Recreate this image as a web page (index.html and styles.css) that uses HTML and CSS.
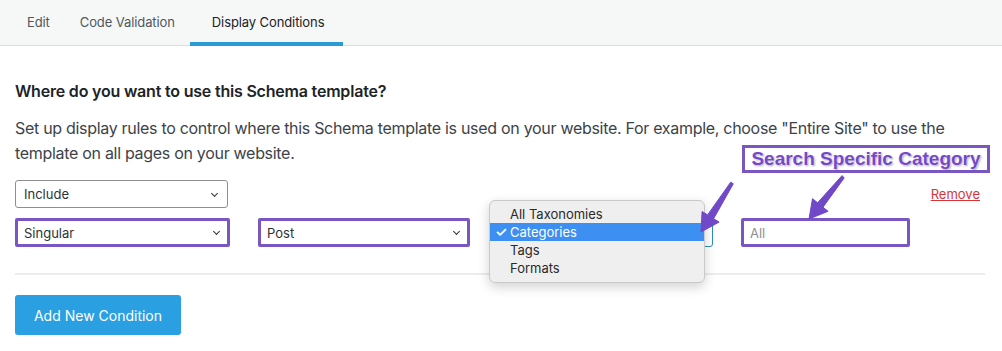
FILE: index.html
```html
<!DOCTYPE html>
<html lang="en">
<head>
  <meta charset="UTF-8">
  <title>Display Conditions</title>
  <link rel="stylesheet" href="styles.css">
</head>
<body>

  <nav class="tabs">
    <a class="tab">Edit</a>
    <a class="tab">Code Validation</a>
    <a class="tab active">Display Conditions</a>
  </nav>

  <main class="panel">
    <h3>Where do you want to use this Schema template?</h3>
    <p class="intro">Set up display rules to control where this Schema template is used on your website. For example, choose "Entire Site" to use the template on all pages on your website.</p>

    <div class="conditions">
      <div class="cond-row">
        <div class="select w-include">Include <span class="chev"></span></div>
        <a class="remove">Remove</a>
      </div>

      <div class="cond-row">
        <div class="select w-type marked">Singular <span class="chev"></span></div>
        <div class="select w-post marked">Post <span class="chev"></span></div>
        <div class="select w-tax focused"><span class="chev"></span></div>
        <div class="field marked">All</div>
      </div>

      <!-- open dropdown of the taxonomy select -->
      <ul class="menu">
        <li>All Taxonomies</li>
        <li class="picked"><span class="tick">✓</span>Categories</li>
        <li>Tags</li>
        <li>Formats</li>
      </ul>

      <div class="callout">Search Specific Category</div>
    </div>

    <hr class="sep">

    <button class="btn">Add New Condition</button>
  </main>

  <svg class="arrows" width="1002" height="351" viewBox="0 0 1002 351">
    <polygon points="733.3,183.8 713.6,218.7 719.1,222.1 701,232 702.1,211.5 707.6,214.9 730.7,182.2" />
    <polygon points="844.2,177.9 823,207.2 828.1,211.3 809,219 812.5,198.7 817.6,202.8 842.1,175.6" />
  </svg>

</body>
</html>
```

FILE: styles.css
```css
body {
  margin: 0;
  font-family: 'Inter', 'Roboto', sans-serif;
  color: #3c434a;
  background: #fff;
  position: relative;
  overflow: hidden;
}

.tabs {
  display: flex;
  height: 46px;
  padding-left: 12px;
  background: #f6f7f7;
  border-bottom: 1px solid #dcdcde;
  box-sizing: border-box;
}

.tab {
  display: flex;
  align-items: center;
  padding: 2px 15px 0;
  font-size: 13px;
  letter-spacing: -0.1px;
  color: #50575e;
  border-bottom: 4px solid transparent;
  margin-bottom: -1px;
}

.tab.active {
  padding: 2px 19px 0 22px;
  color: #1d2327;
  border-bottom-color: #2b9bd3;
}

.panel {
  padding: 0 15px;
}

h3 {
  margin: 35px 0 15px;
  font-size: 16px;
  line-height: 20px;
  font-weight: 600;
  letter-spacing: -0.2px;
  color: #1d2327;
}

.intro {
  margin: 0 0 14px;
  font-size: 16px;
  line-height: 25px;
  letter-spacing: -0.3px;
  color: #3c434a;
}

.conditions {
  position: relative;
}

.cond-row {
  display: flex;
  align-items: center;
  gap: 28px;
  margin-bottom: 10px;
}

.cond-row:first-child {
  justify-content: space-between;
}

.select {
  position: relative;
  display: flex;
  align-items: center;
  height: 28px;
  padding: 0 8px;
  box-sizing: border-box;
  border: 1px solid #8c8f94;
  border-radius: 3px;
  font-size: 13px;
  color: #2c3338;
  background: #fff;
}

.chev {
  position: absolute;
  right: 10px;
  top: 10px;
  width: 4px;
  height: 4px;
  border-right: 1.5px solid #2c3338;
  border-bottom: 1.5px solid #2c3338;
  transform: rotate(45deg);
}

.w-include { width: 213px; }
.w-type { width: 215px; }
.w-post { width: 212px; }
.w-tax { width: 215px; }

.select.marked,
.field.marked {
  height: 29px;
  border: 3px solid #7a56c2;
  border-radius: 2px;
  padding-left: 6px;
}

.select.marked .chev { right: 8px; top: 8px; }

.select.focused {
  border-color: #2c8fbf;
}

.field {
  width: 169px;
  display: flex;
  align-items: center;
  box-sizing: border-box;
  font-size: 13px;
  color: #8c8f94;
}

.remove {
  margin-right: 7px;
  font-size: 13px;
  color: #d63638;
  text-decoration: underline;
}

.menu {
  position: absolute;
  left: 474px;
  top: 20px;
  width: 216px;
  margin: 0;
  padding: 4px 0 5px;
  list-style: none;
  background: #efefef;
  border: 1px solid #c9c9c9;
  border-radius: 6px;
  box-shadow: 0 4px 12px rgba(0,0,0,0.18);
  box-sizing: border-box;
}

.menu li {
  position: relative;
  height: 18px;
  line-height: 18px;
  padding-left: 20px;
  font-size: 13px;
  color: #2a2a2a;
}

.menu li.picked {
  background: #3d8ff2;
  color: #fff;
}

.tick {
  position: absolute;
  left: 5px;
  font-size: 14px;
  font-weight: 600;
}

.callout {
  position: absolute;
  left: 727px;
  top: -35px;
  width: 248px;
  height: 28px;
  box-sizing: border-box;
  border: 3px solid #7a56c2;
  display: flex;
  align-items: center;
  justify-content: center;
  font-family: 'Liberation Sans', Arial, sans-serif;
  font-size: 19px;
  font-weight: 700;
  color: #7548c9;
  background: #fff;
  text-shadow: 0 0 1px #fff, 0 0 2px #fff, 1px 1px 2px rgba(0,0,0,0.4);
}

.sep {
  margin: 26px 2px 20px 0;
  border: 0;
  border-top: 2px solid #ececec;
}

.btn {
  width: 166px;
  height: 40px;
  border: 0;
  border-radius: 3px;
  background: #2a9fe2;
  color: #fff;
  font-family: inherit;
  font-size: 14px;
  font-weight: 400;
}

.arrows {
  position: absolute;
  left: 0;
  top: 0;
  pointer-events: none;
}

.arrows polygon {
  fill: #7048c8;
  stroke: #7048c8;
  stroke-width: 1;
  stroke-linejoin: round;
}
```
